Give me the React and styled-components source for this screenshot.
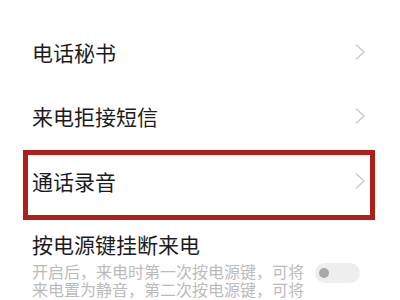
import React from 'react';
import styled, { createGlobalStyle } from 'styled-components';

const GlobalStyle = createGlobalStyle`
  html, body {
    margin: 0;
    padding: 0;
    background: #ffffff;
    overflow: hidden;
  }
  body {
    font-family: "Noto Sans CJK SC", "Noto Sans", sans-serif;
  }
`;

const List = styled.div`
  width: 400px;
  height: 300px;
  padding-top: 20px;
  box-sizing: border-box;
  background: #ffffff;
`;

const Row = styled.div`
  display: flex;
  align-items: center;
  justify-content: space-between;
  height: 64px;
  padding: 0 34px 0 32px;
  box-sizing: border-box;
`;

const BoxedRow = styled(Row)`
  height: 70px;
  margin: 2px 25px 0 23px;
  padding: 0 4px 8px 4px;
  border: 5px solid #ae1f1a;
`;

const Title = styled.div`
  font-size: 21px;
  line-height: 28px;
  color: #1c1c1c;
  letter-spacing: 0;
`;

const SwitchItem = styled.div`
  padding: 10px 0 0 32px;
`;

const DescRow = styled.div`
  display: flex;
  align-items: flex-start;
  gap: 7px;
  margin-top: 4px;
`;

const Desc = styled.div`
  width: 276px;
  font-size: 16px;
  line-height: 18px;
  color: #bbbbbb;
`;

const Toggle = styled.div`
  position: relative;
  flex: none;
  width: 45px;
  height: 20px;
  margin-top: 1px;
  border-radius: 10px;
  background: #eeeeee;
`;

const Knob = styled.span`
  position: absolute;
  left: 4px;
  top: 5px;
  width: 10px;
  height: 10px;
  border-radius: 50%;
  background: #a9a9a9;
`;

const Chevron = () => (
  <svg width="11" height="16" viewBox="0 0 11 16">
    <polyline
      points="1.5,1 9,8 1.5,15"
      fill="none"
      stroke="#cccccc"
      strokeWidth="1.5"
      strokeLinecap="round"
      strokeLinejoin="round"
    />
  </svg>
);

export default function App() {
  return (
    <>
      <GlobalStyle />
      <List>
        <Row>
          <Title>电话秘书</Title>
          <Chevron />
        </Row>
        <Row>
          <Title>来电拒接短信</Title>
          <Chevron />
        </Row>
        <BoxedRow>
          <Title>通话录音</Title>
          <Chevron />
        </BoxedRow>
        <SwitchItem>
          <Title>按电源键挂断来电</Title>
          <DescRow>
            <Desc>开启后，来电时第一次按电源键，可将来电置为静音，第二次按电源键，可将来电挂断</Desc>
            <Toggle>
              <Knob />
            </Toggle>
          </DescRow>
        </SwitchItem>
      </List>
    </>
  );
}
